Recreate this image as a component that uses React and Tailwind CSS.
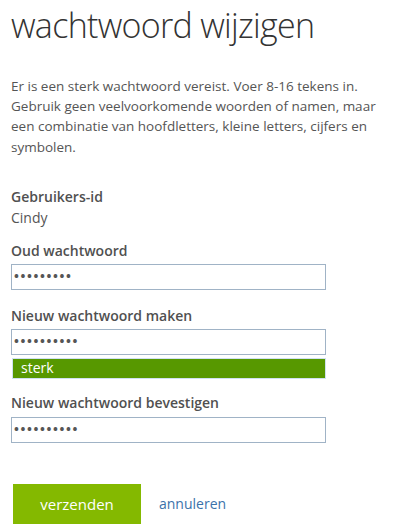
export default function App() {
  const font = { fontFamily: '"Open Sans", "Noto Sans", sans-serif' };

  return (
    <div className="w-[406px] h-[529px] bg-white pl-[11px] text-[#505050]" style={font}>
      <h1 className="pt-[3px] text-[34px] leading-[44px] font-light text-[#333] tracking-[-0.7px]">
        wachtwoord wijzigen
      </h1>

      <p className="mt-[29px] text-[13.5px] leading-[20.2px] text-[#555] whitespace-nowrap">
        Er is een sterk wachtwoord vereist. Voer 8-16 tekens in.
        <br />
        Gebruik geen veelvoorkomende woorden of namen, maar
        <br />
        een combinatie van hoofdletters, kleine letters, cijfers en
        <br />
        symbolen.
      </p>

      <div className="mt-[30px] text-[14px] leading-[20px] font-semibold text-[#505050]">Gebruikers-id</div>
      <div className="mt-[1px] text-[14px] leading-[20px] text-[#555]">Cindy</div>

      <div className="mt-[13px] text-[14px] leading-[20px] font-semibold text-[#505050]">Oud wachtwoord</div>
      <div className="mt-[3px] w-[315px] h-[26px] border border-[#a0b3c6] flex items-center pl-[2px]">
        <span className="text-[13px] font-bold tracking-[1.6px] text-[#555]">•••••••••</span>
      </div>

      <div className="mt-[16px] text-[14px] leading-[20px] font-semibold text-[#505050]">Nieuw wachtwoord maken</div>
      <div className="mt-[3px] w-[315px] h-[26px] border border-[#a0b3c6] flex items-center pl-[2px]">
        <span className="text-[13px] font-bold tracking-[1.6px] text-[#555]">••••••••••</span>
      </div>
      <div className="mt-[3px] ml-[1px] w-[314px] h-[21px] border border-[#cfe2f0] bg-[#579800] flex items-center pl-[8px]">
        <span className="text-[14px] leading-[18px] text-white">sterk</span>
      </div>

      <div className="mt-[14px] text-[14px] leading-[20px] font-semibold text-[#505050]">Nieuw wachtwoord bevestigen</div>
      <div className="mt-[4px] w-[315px] h-[26px] border border-[#a0b3c6] flex items-center pl-[2px]">
        <span className="text-[13px] font-bold tracking-[1.6px] text-[#555]">••••••••••</span>
      </div>

      <div className="mt-[41px] flex items-center">
        <button className="ml-[2px] w-[128px] h-[40px] bg-[#84b900] text-white text-[15px]">verzenden</button>
        <a className="ml-[18px] text-[14px] text-[#3b72aa]">annuleren</a>
      </div>
    </div>
  );
}
